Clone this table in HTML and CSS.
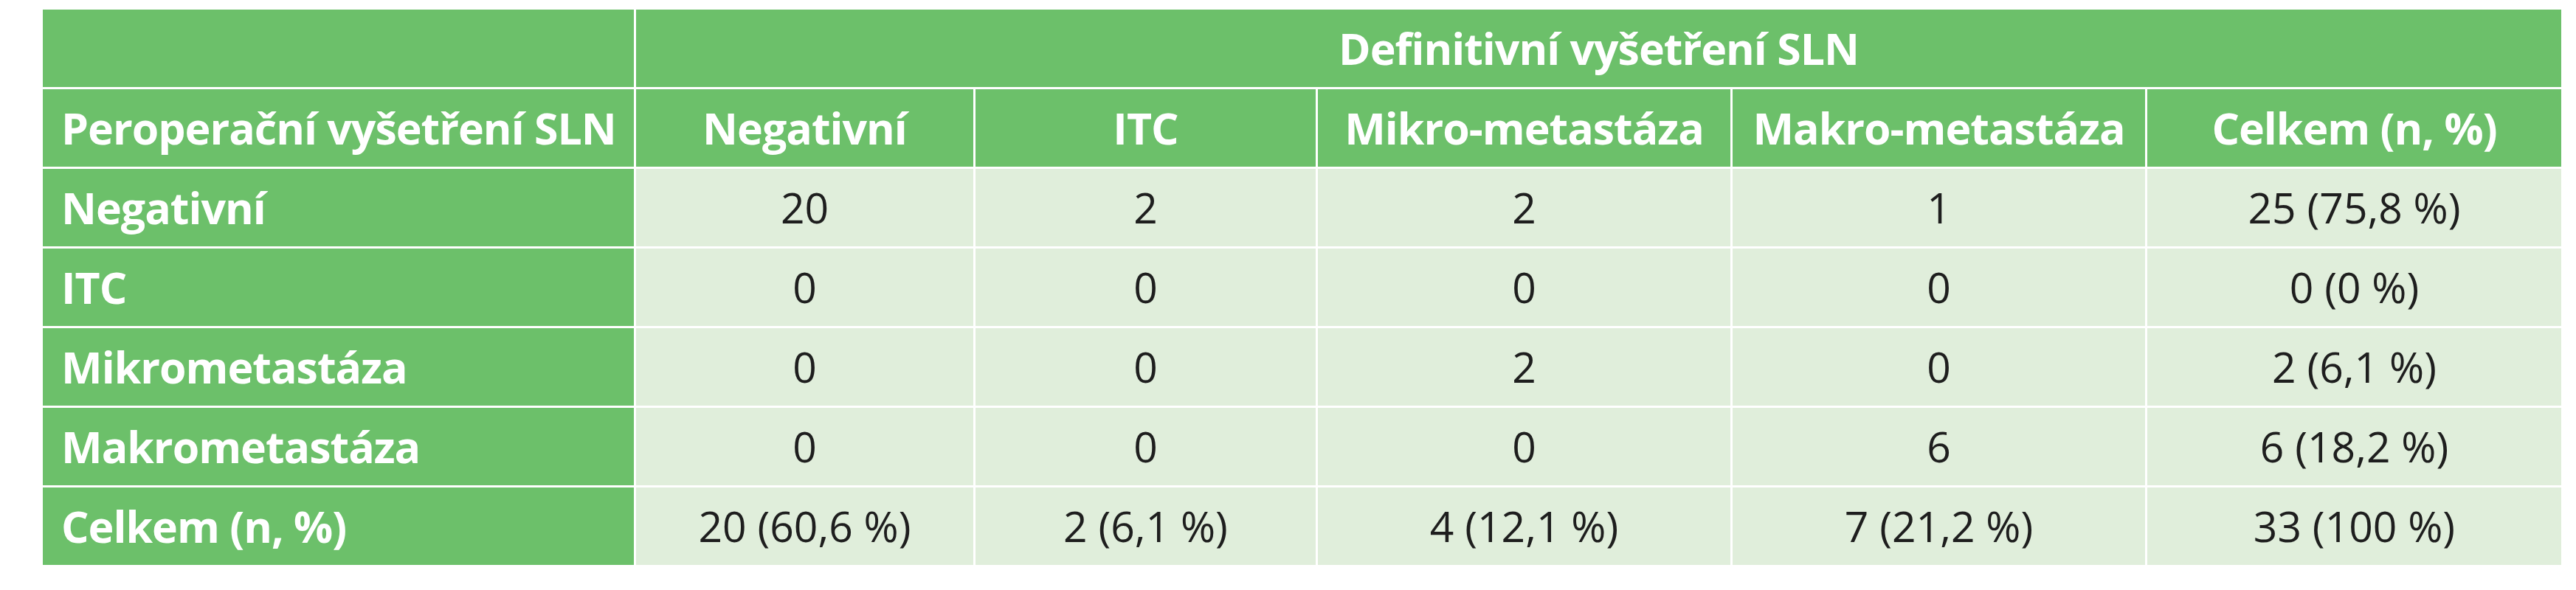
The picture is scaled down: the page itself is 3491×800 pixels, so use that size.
FILE: index.html
```html
<!DOCTYPE html>
<html lang="cs">
<head>
<meta charset="utf-8">
<title>Tabulka SLN</title>
<link rel="stylesheet" href="styles.css">
</head>
<body>
<div class="wrap">
<table class="sln">
  <colgroup>
    <col class="c-label">
    <col class="c-neg">
    <col class="c-itc">
    <col class="c-mikro">
    <col class="c-makro">
    <col class="c-total">
  </colgroup>
  <thead>
    <tr>
      <th class="head"></th>
      <th class="head" colspan="5">Definitivní vyšetření SLN</th>
    </tr>
    <tr>
      <th class="head left">Peroperační vyšetření SLN</th>
      <th class="head">Negativní</th>
      <th class="head">ITC</th>
      <th class="head">Mikro-metastáza</th>
      <th class="head">Makro-metastáza</th>
      <th class="head">Celkem (n, %)</th>
    </tr>
  </thead>
  <tbody>
    <tr>
      <th class="head left">Negativní</th>
      <td>20</td><td>2</td><td>2</td><td>1</td><td>25 (75,8 %)</td>
    </tr>
    <tr>
      <th class="head left">ITC</th>
      <td>0</td><td>0</td><td>0</td><td>0</td><td>0 (0 %)</td>
    </tr>
    <tr>
      <th class="head left">Mikrometastáza</th>
      <td>0</td><td>0</td><td>2</td><td>0</td><td>2 (6,1 %)</td>
    </tr>
    <tr>
      <th class="head left">Makrometastáza</th>
      <td>0</td><td>0</td><td>0</td><td>6</td><td>6 (18,2 %)</td>
    </tr>
    <tr>
      <th class="head left">Celkem (n, %)</th>
      <td>20 (60,6 %)</td><td>2 (6,1 %)</td><td>4 (12,1 %)</td><td>7 (21,2 %)</td><td>33 (100 %)</td>
    </tr>
  </tbody>
</table>
</div>
</body>
</html>
```
FILE: styles.css
```css
html, body {
  margin: 0;
  padding: 0;
  background: #ffffff;
}

.wrap {
  padding: 10px 0 0 55px;
}

.sln {
  border-collapse: collapse;
  table-layout: fixed;
  width: 3416px;
  font-family: "Open Sans", "Noto Sans", "Liberation Sans", sans-serif;
  font-size: 57px;
  color: #1e1e1e;
}

.c-label { width: 804px; }
.c-neg { width: 460px; }
.c-itc { width: 464px; }
.c-mikro { width: 562px; }
.c-makro { width: 562px; }
.c-total { width: 564px; }

.sln th,
.sln td {
  height: 105px;
  padding: 0 8px;
  border: 3px solid #ffffff;
  text-align: center;
  vertical-align: middle;
  white-space: nowrap;
  line-height: 1;
}

.sln td {
  background: #e0eedb;
  font-weight: 400;
}

.sln .head {
  background: #6cc06a;
  color: #ffffff;
  font-size: 59px;
  font-weight: 700;
  font-stretch: 88%;
  letter-spacing: -1px;
}

.sln .left {
  text-align: left;
  padding-left: 25px;
}
```
